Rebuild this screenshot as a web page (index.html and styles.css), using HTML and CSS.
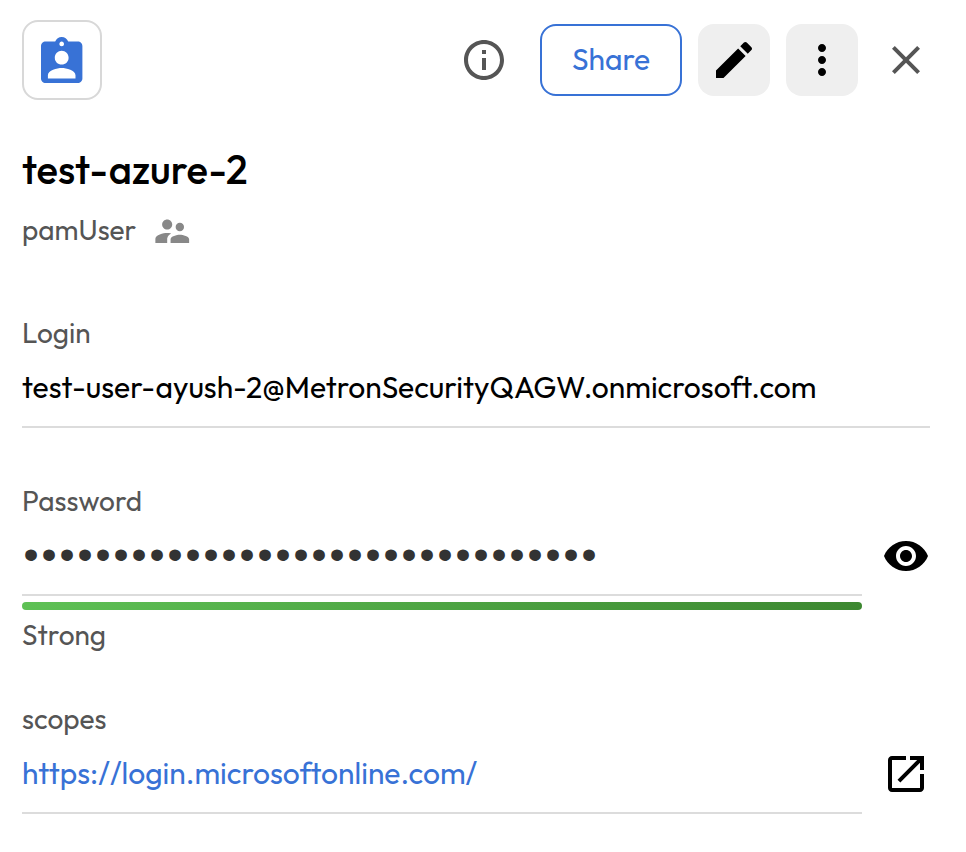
FILE: index.html
```html
<!DOCTYPE html>
<html lang="en">
<head>
<meta charset="utf-8">
<title>test-azure-2</title>
<link rel="stylesheet" href="styles.css">
</head>
<body>
<main class="panel">
  <header class="toolbar">
    <div class="record-icon">
      <svg viewBox="3 1 18 20" width="41.4" height="46"><path fill-rule="evenodd" d="M19 3h-4.18C14.4 1.84 13.3 1 12 1s-2.4.84-2.82 2H5c-1.1 0-2 .9-2 2v14c0 1.1.9 2 2 2h14c1.1 0 2-.9 2-2V5c0-1.1-.9-2-2-2zm-7 0c.55 0 1 .45 1 1s-.45 1-1 1-1-.45-1-1 .45-1 1-1zm0 4c1.66 0 3 1.34 3 3s-1.34 3-3 3-3-1.34-3-3 1.34-3 3-3zm6 12H6v-1.4c0-2 4-3.1 6-3.1s6 1.1 6 3.1V19z"/></svg>
    </div>
    <div class="actions">
      <svg class="icon info" viewBox="0 0 24 24"><path d="M11 7h2v2h-2zm0 4h2v6h-2zm1-9C6.48 2 2 6.48 2 12s4.48 10 10 10 10-4.48 10-10S17.52 2 12 2zm0 18c-4.41 0-8-3.59-8-8s3.59-8 8-8 8 3.59 8 8-3.59 8-8 8z"/></svg>
      <button class="share"><span>Share</span></button>
      <button class="tile"><svg class="icon" viewBox="0 0 24 24"><path d="M3 17.25V21h3.75L17.81 9.94l-3.75-3.75L3 17.25zM20.71 7.04c.39-.39.39-1.02 0-1.41l-2.34-2.34c-.39-.39-1.02-.39-1.41 0l-1.83 1.83 3.75 3.75 1.83-1.83z"/></svg></button>
      <button class="tile"><svg class="icon" viewBox="0 0 24 24"><path d="M12 8c1.1 0 2-.9 2-2s-.9-2-2-2-2 .9-2 2 .9 2 2 2zm0 2c-1.1 0-2 .9-2 2s.9 2 2 2 2-.9 2-2-.9-2-2-2zm0 6c-1.1 0-2 .9-2 2s.9 2 2 2 2-.9 2-2-.9-2-2-2z"/></svg></button>
      <svg class="icon close" viewBox="0 0 24 24"><path d="M19 6.41L17.59 5 12 10.59 6.41 5 5 6.41 10.59 12 5 17.59 6.41 19 12 13.41 17.59 19 19 17.59 13.41 12z"/></svg>
    </div>
  </header>

  <h1 class="title">test-azure-2</h1>
  <div class="subtitle">
    <span class="type">pamUser</span>
    <svg class="shared" viewBox="0 0 24 24"><path d="M16.5 12c1.38 0 2.49-1.12 2.49-2.5S17.88 7 16.5 7C15.12 7 14 8.12 14 9.5s1.12 2.5 2.5 2.5zM9 11c1.66 0 2.99-1.34 2.99-3S10.66 5 9 5C7.34 5 6 6.34 6 8s1.34 3 3 3zm7.5 3c-1.83 0-5.5.92-5.5 2.75V19h11v-2.25c0-1.83-3.67-2.75-5.5-2.75zM9 13c-2.33 0-7 1.17-7 3.5V19h7v-2.25c0-.85.33-2.34 2.37-3.47C10.5 13.1 9.66 13 9 13z"/></svg>
  </div>

  <section class="field login">
    <div class="label">Login</div>
    <div class="value">test-user-ayush-2@MetronSecurityQAGW.onmicrosoft.com</div>
  </section>

  <section class="field password">
    <div class="label">Password</div>
    <div class="row">
      <div class="value dots">••••••••••••••••••••••••••••••••</div>
      <svg class="icon" viewBox="0 0 24 24"><path d="M12 4.5C7 4.5 2.73 7.61 1 12c1.73 4.39 6 7.5 11 7.5s9.27-3.11 11-7.5c-1.73-4.39-6-7.5-11-7.5zM12 17c-2.76 0-5-2.24-5-5s2.24-5 5-5 5 2.24 5 5-2.24 5-5 5zm0-8c-1.66 0-3 1.34-3 3s1.34 3 3 3 3-1.34 3-3-1.34-3-3-3z"/></svg>
    </div>
    <div class="meter"></div>
    <div class="label">Strong</div>
  </section>

  <section class="field scopes">
    <div class="label">scopes</div>
    <div class="row">
      <div class="value link">https://login.microsoftonline.com/</div>
      <svg class="icon" viewBox="0 0 24 24"><path d="M19 19H5V5h7V3H5c-1.11 0-2 .9-2 2v14c0 1.1.89 2 2 2h14c1.1 0 2-.9 2-2v-7h-2v7zM14 3v2h3.59l-9.83 9.83 1.41 1.41L19 6.41V10h2V3h-7z"/></svg>
    </div>
  </section>
</main>
</body>
</html>
```
FILE: styles.css
```css
* { box-sizing: border-box; }
body {
  margin: 0;
  background: #fff;
  color: #000;
  font-family: Outfit, Lato, "Open Sans", sans-serif;
  font-variant-ligatures: none;
}
svg { display: block; flex: none; }
.panel { height: 852px; padding: 20px 36px 0 22px; overflow: hidden; }

.toolbar { display: flex; justify-content: space-between; align-items: center; height: 80px; }
.record-icon {
  display: flex; align-items: center; justify-content: center;
  width: 80px; height: 80px;
  border: 2px solid #d8d8d8; border-radius: 16px;
}
.record-icon svg { fill: #3872d6; }
.actions { display: flex; align-items: center; gap: 16px; }
.icon { width: 48px; height: 48px; fill: #000; }
.info { fill: #555; margin-right: 16px; }
.close { fill: #555; margin-left: 8px; }
button { font: inherit; padding: 0; display: flex; align-items: center; justify-content: center; height: 72px; }
.share {
  width: 142px; padding-bottom: 2px; background: #fff; color: #3872d6;
  border: 2px solid #3872d6; border-radius: 16px;
  font-size: 30px;
}
.tile { width: 72px; border: 0; border-radius: 16px; background: #efefef; }

.title { margin: 44px 0 0; font-size: 40px; line-height: 50px; font-weight: 500; white-space: nowrap; }
.subtitle { display: flex; align-items: center; height: 40px; margin-top: 16px; }
.type { width: 130px; font-size: 28px; line-height: 40px; color: #555; }
.shared { width: 40.5px; height: 40.5px; margin-top: 2px; fill: #888; }

.label { padding-top: 1px; height: 40px; font-size: 28px; line-height: 40px; color: #555; }
.value { height: 76px; border-bottom: 2px solid #dcdcdc; font-size: 30px; line-height: 70px; white-space: nowrap; }
.login { margin-top: 62px; }
.password { margin-top: 52px; }
.scopes { margin-top: 44px; }
.row { display: flex; gap: 20px; }
.row .value { flex: 1; }
.row .icon { margin-top: 12px; }
.link { color: #3872d6; }
.dots { color: #333; font-family: "Liberation Sans", sans-serif; font-size: 43px; line-height: 68px; letter-spacing: 2.95px; text-indent: 1.4px; }
.meter { width: 840px; height: 8px; margin: 6px 0 4px; border-radius: 4px; background: linear-gradient(135deg, #5ec155, #3c8730); }
```
